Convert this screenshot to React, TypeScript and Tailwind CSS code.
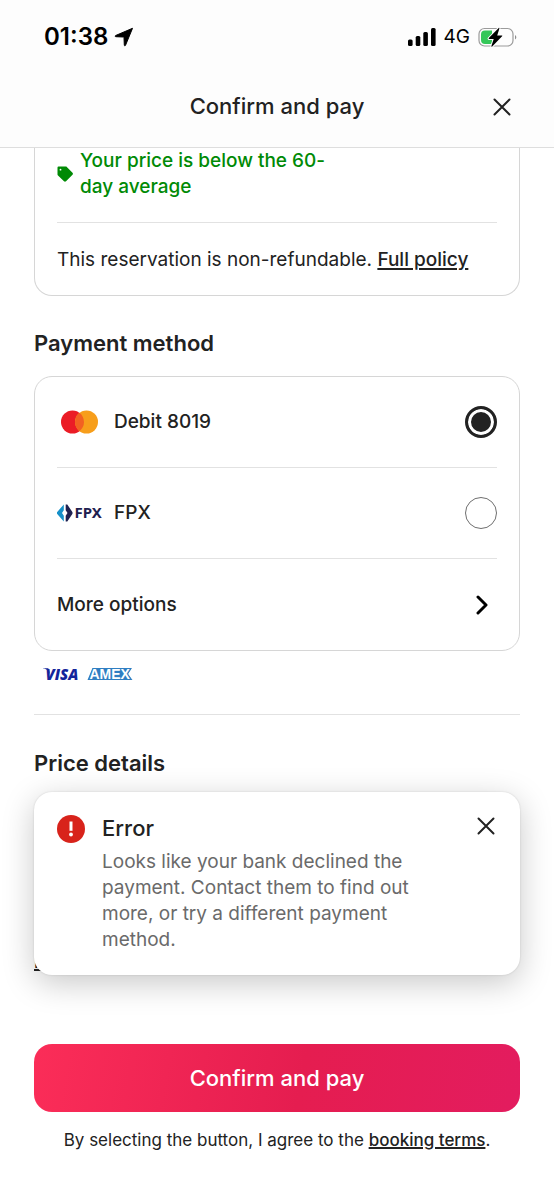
import { useState } from "react";

type CloseProps = {
  label: string;
  onClick?: () => void;
};

function CloseButton({ label, onClick }: CloseProps) {
  return (
    <button type="button" aria-label={label} onClick={onClick} className="p-2 text-[#222222]">
      <svg viewBox="0 0 20 20" className="block size-5" fill="none" stroke="currentColor" strokeWidth="2" strokeLinecap="round">
        <path d="M2.5 2.5l15 15M17.5 2.5l-15 15" />
      </svg>
    </button>
  );
}

function StatusBar() {
  return (
    <div className="flex h-[74px] items-center justify-between pl-11 pr-9 text-black">
      <div className="flex items-center gap-[6px]">
        <span className="text-[24px] leading-8 font-semibold">01:38</span>
        <svg viewBox="0 0 20 20" className="size-5" fill="currentColor" stroke="currentColor" strokeWidth="1" strokeLinejoin="round">
          <path d="M18.500 1.300 11.500 18.300c-.3.800-1.200.700-1.200-.2l-.3-7.600c0-.3-.200-.5-.5-.5l-7.600-.3c-.9 0-1-.9-.2-1.200z" />
        </svg>
      </div>
      <div className="flex items-center gap-2">
        <svg viewBox="0 0 28 18" className="h-[18px] w-7" fill="currentColor">
          <rect x="0" y="11.500" width="4.600" height="6.500" rx="1.500" />
          <rect x="7.700" y="8" width="4.600" height="10" rx="1.500" />
          <rect x="15.300" y="4" width="4.600" height="14" rx="1.500" />
          <rect x="23" y="0" width="4.600" height="18" rx="1.500" />
        </svg>
        <span className="text-[19px] leading-8">4G</span>
        <svg viewBox="0 0 40 22" className="h-[22px] w-10">
          <rect x="1" y="2.500" width="34" height="17.500" rx="5.500" fill="none" stroke="#9b9b9b" strokeWidth="1.200" />
          <path d="M7 4.500h7v13.500H7a4 4 0 0 1-4-4V8.500a4 4 0 0 1 4-4z" fill="#34c759" />
          <path d="M37 9c1.800.8 1.800 3.700 0 4.500z" fill="#8e8e8e" />
          <path
            d="M20.700 2c.4-.4.9-.1.700.4l-2.200 7h4.600c.5 0 .7.500.3.900L14.200 20.500c-.4.400-1 .1-.8-.5l2.300-7h-4.600c-.5 0-.700-.5-.3-.9z"
            fill="#000"
            stroke="#fff"
            strokeWidth="2"
            paintOrder="stroke"
          />
        </svg>
      </div>
    </div>
  );
}

function MastercardLogo() {
  return (
    <svg viewBox="0 0 46 24" className="h-6 w-[46px]" aria-hidden="true">
      <circle cx="15.500" cy="12" r="11.500" fill="#eb1c26" />
      <circle cx="29.500" cy="12" r="11.500" fill="#f79e1b" />
      <path d="M22.500 2.870a11.500 11.500 0 0 1 0 18.260 11.500 11.500 0 0 1 0-18.260z" fill="#f26122" />
    </svg>
  );
}

function FpxLogo() {
  return (
    <svg viewBox="0 0 46 24" className="h-6 w-[46px] overflow-visible" aria-hidden="true">
      <path d="M6.800 3.500v5.700L5 12l1.800 2.800v5.700L0 12.800v-1.600z" fill="#1590c9" />
      <path d="M8.700 3.500h1.600l5.200 7.700v1.600l-5.200 7.700H8.700v-5.700l1.800-2.800-1.800-2.800z" fill="#1f2150" />
      <text x="17.500" y="17" fontSize="15" fontWeight="700" fontFamily="Noto Sans, sans-serif" fill="#1f2150">
        FPX
      </text>
    </svg>
  );
}

function VisaLogo() {
  return (
    <svg viewBox="0 0 36 24" className="h-6 w-9 overflow-visible" role="img" aria-label="Visa">
      <path d="M0 6.200h4.200c1 0 1.600.4 1.800 1.300L7.200 13 5.700 9.500C4.600 7.700 2.500 6.800 0 6.500z" fill="#14259b" />
      <text x="2.500" y="17.500" fontSize="15" fontWeight="800" fontStyle="italic" fontFamily="Open Sans, sans-serif" fill="#14259b">
        VISA
      </text>
    </svg>
  );
}

function AmexLogo() {
  return (
    <svg viewBox="0 0 46 24" className="h-6 w-[46px] overflow-visible" role="img" aria-label="American Express">
      <path d="M5.500 6h39.500l-4 6 4.500 6H.5z" fill="#2f7ec2" />
      <text
        x="2.500"
        y="16.800"
        fontSize="14"
        fontWeight="700"
        fontFamily="Liberation Sans, Arial, sans-serif"
        fill="#fff"
        stroke="#2f7ec2"
        strokeWidth="2"
        strokeLinejoin="round"
        paintOrder="stroke"
      >
        AMEX
      </text>
    </svg>
  );
}

const methods = [
  { id: "debit", name: "Debit 8019", logo: <MastercardLogo /> },
  { id: "fpx", name: "FPX", logo: <FpxLogo /> },
];

export default function App() {
  const [method, setMethod] = useState("debit");
  const [showError, setShowError] = useState(true);

  return (
    <div className="flex min-h-screen flex-col bg-white font-[Inter,sans-serif] text-[19px] leading-[26px] text-[#222222]">
      <header className="border-b border-[#dedede] bg-[#fdfdfd]">
        <StatusBar />
        <div className="grid h-[73px] grid-cols-[1fr_auto_1fr] items-start px-[34px]">
          <h1 className="col-start-2 pt-[19px] text-[22px] font-medium">Confirm and pay</h1>
          <div className="justify-self-end pt-[15px]">
            <CloseButton label="Close" />
          </div>
        </div>
      </header>

      <main className="px-[34px]">
        <section className="rounded-b-[18px] border-x border-b border-[#d6d6d6] px-[22px]">
          <div className="flex items-center border-b border-[#e2e2e2] pb-[22px] font-medium text-[#008a05]">
            <svg viewBox="0 0 16 16" className="mr-[7px] size-4 shrink-0" fill="currentColor">
              <path fillRule="evenodd" d="M1.500.5h7.300c.4 0 .8.100 1 .4l5.700 5.800c.6.600.6 1.400 0 2L9 15.300c-.6.600-1.400.600-2 0L1 9.500c-.3-.3-.5-.700-.5-1.100v-7c0-.5.400-.9 1-.9zM3.500 2.800a.9.900 0 1 0 0 1.800.9.900 0 0 0 0-1.800z" />
            </svg>
            <p className="max-w-[270px]">Your price is below the 60-day average</p>
          </div>
          <p className="pt-6 pb-[22px]">
            This reservation is non-refundable.{" "}
            <a href="#policy" className="font-medium underline decoration-2 underline-offset-2">Full policy</a>
          </p>
        </section>

        <h2 className="pt-[34px] pb-5 text-[22px] font-semibold">Payment method</h2>

        <div className="rounded-[18px] border border-[#d6d6d6] px-[22px] font-medium">
          {methods.map((m) => (
            <label key={m.id} className="flex h-[91px] items-center border-b border-[#e2e2e2]">
              {m.logo}
              <span className="ml-[11px] flex-1">{m.name}</span>
              <input
                type="radio"
                name="method"
                value={m.id}
                checked={method === m.id}
                onChange={() => setMethod(m.id)}
                className="size-8 appearance-none rounded-full border border-[#6f6f6f] bg-white checked:border-[3px] checked:border-[#222222] checked:bg-[#222222] checked:inset-ring-[3px] checked:inset-ring-white"
              />
            </label>
          ))}
          <button type="button" className="flex h-[91px] w-full items-center justify-between pr-[9px] text-left">
            More options
            <svg viewBox="0 0 12 20" className="h-5 w-3" fill="none" stroke="#000" strokeWidth="3" strokeLinecap="round" strokeLinejoin="round">
              <path d="M2 2l8 8-8 8" />
            </svg>
          </button>
        </div>

        <div className="flex h-16 items-start gap-2 border-b border-[#e2e2e2] px-[9px] pt-[11px]">
          <VisaLogo />
          <AmexLogo />
        </div>

        <section className="pt-[35px]">
          <h2 className="text-[22px] font-semibold">Price details</h2>
          <a href="#breakdown" className="mt-[173px] block w-fit text-[17px] font-medium underline decoration-2">More info</a>
        </section>
      </main>

      <footer className="relative mt-auto px-[34px] pt-8 pb-[47px]">
        {showError && (
          <div role="alert" className="absolute inset-x-[34px] bottom-[225px] flex items-start rounded-[18px] bg-white pt-[23px] pr-4 pb-[22px] pl-[23px] shadow-[0_8px_32px_rgba(0,0,0,0.22),0_0_2px_rgba(0,0,0,0.15)]">
            <svg viewBox="0 0 28 28" className="mr-[17px] size-7 shrink-0" aria-hidden="true">
              <circle cx="14" cy="14" r="14" fill="#d8231b" />
              <path d="M12.500 6.500h3v9.300h-3z" fill="#fff" />
              <circle cx="14" cy="19.500" r="1.900" fill="#fff" />
            </svg>
            <div className="flex-1">
              <h3 className="mb-2 text-[22px] font-medium">Error</h3>
              <p className="max-w-[340px] text-[#6a6a6a]">
                Looks like your bank declined the payment. Contact them to find out more, or try a different payment method.
              </p>
            </div>
            <div className="-mt-[7px]">
              <CloseButton label="Dismiss" onClick={() => setShowError(false)} />
            </div>
          </div>
        )}
        <button type="button" className="h-[68px] w-full rounded-[18px] bg-linear-[100deg,#fb2d58_0%,#e51d50_55%,#e31c5f_100%] text-[22px] font-medium text-white">
          Confirm and pay
        </button>
        <p className="pt-[15px] text-center text-[17px]">
          By selecting the button, I agree to the{" "}
          <a href="#terms" className="font-medium underline decoration-2">booking terms</a>.
        </p>
      </footer>
    </div>
  );
}
